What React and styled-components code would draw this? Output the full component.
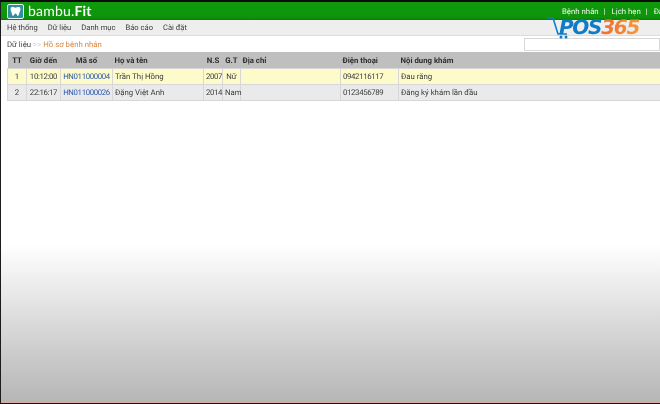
import React from "react";
import styled, { createGlobalStyle } from "styled-components";

const COLUMNS = [
  { name: "TT", width: 19, center: true },
  { name: "Giờ đến", width: 34, center: true, numeric: true },
  { name: "Mã số", width: 52, center: true, numeric: true },
  { name: "Họ và tên", width: 91 },
  { name: "N.S", width: 19, center: true, numeric: true },
  { name: "G.T", width: 18, center: true },
  { name: "Địa chỉ", width: 100 },
  { name: "Điện thoại", width: 58, numeric: true },
  { name: "Nội dung khám", width: 270 },
];

const PATIENTS = [
  ["1", "10:12:00", "HN011000004", "Trần Thị Hồng", "2007", "Nữ", "", "0942116117", "Đau răng"],
  ["2", "22:16:17", "HN011000026", "Đặng Việt Anh", "2014", "Nam", "", "0123456789", "Đăng ký khám lần đầu"],
];

const MENU_ITEMS = ["Hệ thống", "Dữ liệu", "Danh mục", "Báo cáo", "Cài đặt"];
const TOP_LINKS = ["Bệnh nhân", "Lịch hẹn", "Đặt"];

const GlobalStyle = createGlobalStyle`
  html, body {
    margin: 0;
    padding: 0;
    background: #fff;
    overflow: hidden;
  }
  body {
    font-family: Roboto, "Liberation Sans", Arial, sans-serif;
    text-rendering: geometricPrecision;
  }
`;

const Page = styled.div`
  position: relative;
  width: 660px;
  height: 404px;
  box-sizing: border-box;
  display: flex;
  flex-direction: column;
  overflow: hidden;
  border-top: 2px solid #0c0c0c;
  border-left: 1px solid #1c1c1c;
  border-bottom: 1px solid #151515;
  filter: blur(0.35px);
`;

const Header = styled.header`
  height: 18px;
  flex: none;
  display: flex;
  align-items: center;
  justify-content: space-between;
  padding-left: 6px;
  background: linear-gradient(#0f9a0c, #0e940a 85%, #0a7c08);
`;

const Brand = styled.div`
  display: flex;
  align-items: center;
  gap: 4px;
`;

const BrandName = styled.span`
  font-family: Lato, sans-serif;
  font-size: 14px;
  line-height: 18px;
  color: #fff;
  letter-spacing: 0.2px;
  b {
    font-weight: 700;
  }
`;

const TopLinks = styled.nav`
  display: flex;
  align-items: center;
  width: 98px;
  flex: none;
  overflow: hidden;
  white-space: nowrap;
  font-size: 7.8px;
  color: #f2f8f0;
`;

const TopLink = styled.span`
  flex: none;
  & + &::before {
    content: "|";
    margin: 0 6px 0 5px;
  }
`;

const MenuBar = styled.nav`
  height: 15px;
  flex: none;
  display: flex;
  align-items: center;
  gap: 10px;
  padding-left: 6px;
  background: #eeeeee;
  border-bottom: 1px solid #dcdcdc;
  font-size: 7.6px;
  color: #3a3a3a;
`;

const Content = styled.main`
  flex: 1;
  min-height: 0;
  padding-left: 6px;
  background: linear-gradient(#fff 208px, #e6e6e6 262px, #c8c8c8 325px, #b6b6b6 366px);
  border-bottom: 1px solid #d6aca0;
`;

const Crumbs = styled.div`
  height: 16px;
  display: flex;
  align-items: center;
  font-size: 7.8px;
  color: #444;
`;

const CrumbSep = styled.span`
  margin: 0 2px;
  color: #c9c9c9;
`;

const CrumbCurrent = styled.span`
  color: #d9853f;
`;

const SearchBox = styled.input`
  width: 136px;
  height: 13px;
  box-sizing: border-box;
  margin-left: auto;
  flex: none;
  border: 1px solid #d8d8d8;
  background: #fff;
  outline: none;
`;

const Table = styled.table`
  width: 661px;
  table-layout: fixed;
  border-collapse: collapse;
  font-size: 7.8px;
  color: #3a3a3a;
`;

const HeadCell = styled.th`
  height: 16px;
  padding: 0 2px;
  background: #bfbfbf;
  font-weight: 700;
  color: #2e2e2e;
  white-space: nowrap;
  text-align: ${(p) => (p.$center ? "center" : "left")};
`;

const Cell = styled.td`
  height: 15px;
  padding: 0 2px;
  white-space: nowrap;
  border: 1px solid #d7d7d7;
  letter-spacing: ${(p) => (p.$numeric ? "-0.35px" : "0")};
  text-align: ${(p) => (p.$center ? "center" : "left")};
  background: ${(p) => (p.$highlight ? "#fdfbc9" : "#eaeaed")};
  color: ${(p) => (p.$link ? "#2a56a8" : "#3a3a3a")};
`;

const Watermark = styled.div`
  position: absolute;
  left: 544px;
  top: 14px;
  display: flex;
  align-items: flex-start;
`;

const WatermarkText = styled.span`
  margin-left: 14px;
  font-family: "DejaVu Sans", sans-serif;
  font-size: 20px;
  line-height: 22px;
  font-weight: 700;
  font-style: italic;
  letter-spacing: -1.3px;
  white-space: nowrap;
  color: #0f7cc6;
`;

const WatermarkAccent = styled.span`
  background: linear-gradient(100deg, #ee6a30, #f79a38);
  -webkit-background-clip: text;
  background-clip: text;
  -webkit-text-fill-color: transparent;
`;

const CartIcon = styled.svg`
  position: absolute;
  left: 0;
  top: 0;
`;

const ToothLogo = () => (
  <svg width="17" height="15" viewBox="0 0 17 15">
    <rect x="0.5" y="0.5" width="16" height="14" rx="1.5" fill="#2f8f9c" stroke="#e8f6f0" />
    <path
      d="M4 3.5c1.5-.8 3-.3 4.500.2 1.500-.5 3-1 4.500-.2 1 1.500.2 3.500-.5 5-.4 1.200-.6 3-1.500 3.500-1 .2-1-2.500-2.500-2.500s-1.500 2.700-2.500 2.500c-.9-.5-1.100-2.300-1.500-3.500C4 7 3 5 4 3.500z"
      fill="#fff"
    />
  </svg>
);

const Cart = () => (
  <CartIcon width="24" height="26" viewBox="0 0 24 26">
    <path d="M2 2h6l5 16h9" fill="none" stroke="#0f7cc6" strokeWidth="1.600" />
    <circle cx="16" cy="21" r="1.500" fill="#0f7cc6" />
    <circle cx="21" cy="21" r="1.500" fill="#0f7cc6" />
  </CartIcon>
);

const App = () => {
  return (
    <Page>
      <GlobalStyle />
      <Header>
        <Brand>
          <ToothLogo />
          <BrandName>
            bambu.<b>Fit</b>
          </BrandName>
        </Brand>
        <TopLinks>
          {TOP_LINKS.map((link) => (
            <TopLink key={link}>{link}</TopLink>
          ))}
        </TopLinks>
      </Header>
      <MenuBar>
        {MENU_ITEMS.map((item) => (
          <span key={item}>{item}</span>
        ))}
      </MenuBar>
      <Content>
        <Crumbs>
          Dữ liệu
          <CrumbSep>&gt;&gt;</CrumbSep>
          <CrumbCurrent>Hồ sơ bệnh nhân</CrumbCurrent>
          <SearchBox />
        </Crumbs>
        <Table>
          <colgroup>
            {COLUMNS.map(({ name, width }) => (
              <col key={name} width={width} />
            ))}
          </colgroup>
          <thead>
            <tr>
              {COLUMNS.map(({ name, center }) => (
                <HeadCell key={name} $center={center}>
                  {name}
                </HeadCell>
              ))}
            </tr>
          </thead>
          <tbody>
            {PATIENTS.map((row, rowIndex) => (
              <tr key={row[2]}>
                {row.map((value, index) => (
                  <Cell
                    key={index}
                    $center={COLUMNS[index].center}
                    $numeric={COLUMNS[index].numeric}
                    $highlight={rowIndex === 0}
                    $link={index === 2}
                  >
                    {value}
                  </Cell>
                ))}
              </tr>
            ))}
          </tbody>
        </Table>
      </Content>
      <Watermark>
        <Cart />
        <WatermarkText>
          POS<WatermarkAccent>365</WatermarkAccent>
        </WatermarkText>
      </Watermark>
    </Page>
  );
};

export default App;
